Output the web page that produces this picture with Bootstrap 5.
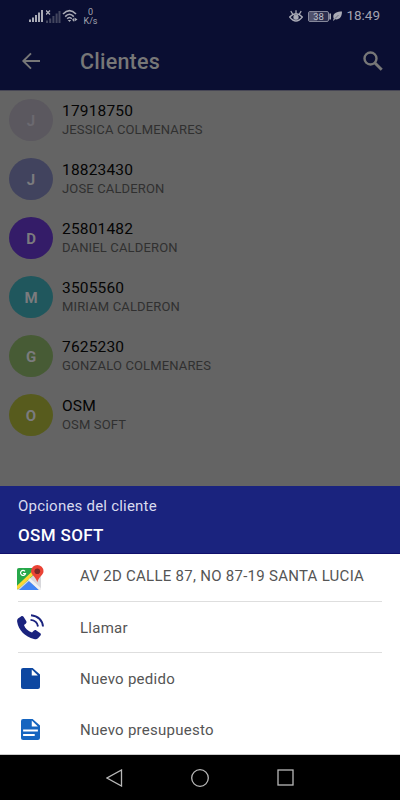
<!DOCTYPE html>
<html lang="es">
<head>
<meta charset="utf-8">
<meta name="viewport" content="width=device-width, initial-scale=1">
<title>Clientes</title>
<link href="https://cdn.jsdelivr.net/npm/bootstrap@5.3.0/dist/css/bootstrap.min.css" rel="stylesheet">
<style>
body{font-family:Roboto,"Liberation Sans",sans-serif;width:400px;height:800px;background:#646464;line-height:1}
svg{display:block;flex:none}
.topbar{height:90px;background:#0a0e32;color:#777}
.status{height:32px;padding:0 20px 0 29px;color:#a3a4b0}
.rate{font-size:9px;line-height:9.5px;margin:2px 0 0 5px;width:15px}
.clock{font-size:13.5px;margin-left:4px}
.appbar{height:58px;padding:0 17px 0 21px}
.app-title{font-size:21.5px;font-weight:500;letter-spacing:.22px;margin:1px 0 0 39px}
.clients{height:396px;border-top:1px solid #474755}
.client{height:59px;padding:0 9px}
.avatar{width:44px;height:42px;margin-top:-1px;padding-top:2px;font-size:15px;font-weight:700;color:#7b7b7e}
.avatar-pale{color:#6b6970}
.client-text{margin:-2px 0 0 9px}
.client-code{font-size:15.5px;line-height:18px;color:#050505;letter-spacing:.17px}
.client-name{font-size:13px;line-height:17px;color:#303030;margin-top:1px;letter-spacing:.15px}
.sheet-head{height:68px;background:#1a237e;padding:11px 18px 0;border-bottom:1px solid #10106b}
.sheet-sub{font-size:15px;line-height:18px;color:#d9dbef;letter-spacing:.22px}
.sheet-name{font-size:17px;line-height:20px;font-weight:500;margin-top:10px;letter-spacing:.35px}
.sheet{height:201px;padding:0 18px;border-bottom:1px solid #ccc}
.option{font-size:15px;color:#555;letter-spacing:.27px}
.option svg{margin-right:36px}
.addr{margin-top:-3px}
.low{margin-top:2px}
.ruled{border-bottom:1px solid #dedede}
.sysnav{height:45px;padding:0 106px}
</style>
</head>
<body class="overflow-hidden">
<header class="topbar">
  <div class="status d-flex align-items-center">
    <svg width="14" height="12" viewBox="0 1 14 12" fill="#aaabb6"><path d="M0 10.500h2V13H0zM3 8.500h2V13H3zM6 6h2v7H6zM9 3.500h2V13H9zM12 1h2v12h-2z"/></svg>
    <svg width="15" height="13" viewBox="0 0 15 13" style="margin-left:3px" fill="#43465f"><path d="M0 10.500h2V13H0zM3.200 8.500h2V13h-2zM6.400 6h2v7h-2zM9.600 3.500h2V13h-2zM12.500 1h2v12h-2z"/><path d="M0 .5l4 4M4 .5l-4 4" stroke="#b0b1bc" stroke-width="1.3"/></svg>
    <svg width="16" height="14" viewBox="0 0 16 14" style="margin-left:1px" fill="none" stroke="#aaabb6" stroke-width="1.6"><path d="M1 5Q7.5-1.7 14 5M3.2 7.6Q7.5 3 11.8 7.6M5.2 9.8Q7.5 7.2 9.8 9.8"/><path d="M5.8 11L7.5 13 9.2 11zM12.5 8.500v4l3-2zM12 9l-2 1.800 2 2z" fill="#aaabb6" stroke="none"/></svg>
    <div class="rate text-center">0<br>K/s</div>
    <svg width="14" height="12" viewBox="0 0 14 12" class="ms-auto" fill="none" stroke="#aaabb6" stroke-width="1.3"><path d="M.7 7Q7 .5 13.3 7 7 15 .7 7zM7 3.500V.3M3.600 4L1.800 1.200M10.400 4l1.800-2.800"/><circle cx="7" cy="7.200" r="2" fill="#aaabb6"/></svg>
    <svg width="23" height="11" viewBox="0 0 23 11" style="margin-left:5px"><rect x=".5" y=".5" width="20" height="10" rx="1.5" fill="#2b2e4e" stroke="#85879a"/><rect x="1" y="1" width="8" height="9" fill="#50526d"/><path d="M21.300 2.500h1.700v6h-1.700z" fill="#aaabb6"/><text x="10.5" y="8.800" text-anchor="middle" font-size="9.5" fill="#c0c1ca">38</text></svg>
    <svg width="9" height="10" viewBox="0 0 9 10" style="margin-left:2px" fill="#aaabb6"><path d="M9 .5C4 .5.3 2 .3 5.500c0 1 .2 1.600.5 2L0 9.300l.7.5L2 8.300C6.500 9 9 6 9 .5z"/><path d="M2 7.500L5.500 4" stroke="#0a0e32" stroke-width=".4"/></svg>
    <div class="clock">18:49</div>
  </div>
  <div class="appbar d-flex align-items-center">
    <svg width="20" height="18" fill="none" stroke="#777" stroke-width="1.9"><path d="M19 9H2.500M10 1.300L2.300 9 10 16.700"/></svg>
    <div class="app-title">Clientes</div>
    <svg width="20" height="20" viewBox="0 0 20 20" class="ms-auto" fill="none" stroke="#777"><circle cx="7.500" cy="7.500" r="6" stroke-width="2.400"/><path d="M11.700 11.700l7 7" stroke-width="2.900"/></svg>
  </div>
</header>
<main class="clients">
  <div class="client d-flex align-items-center"><div class="avatar avatar-pale rounded-circle d-flex align-items-center justify-content-center" style="background:#5b585f">J</div><div class="client-text"><div class="client-code">17918750</div><div class="client-name">JESSICA COLMENARES</div></div></div>
  <div class="client d-flex align-items-center"><div class="avatar rounded-circle d-flex align-items-center justify-content-center" style="background:#41435e">J</div><div class="client-text"><div class="client-code">18823430</div><div class="client-name">JOSE CALDERON</div></div></div>
  <div class="client d-flex align-items-center"><div class="avatar rounded-circle d-flex align-items-center justify-content-center" style="background:#341c68">D</div><div class="client-text"><div class="client-code">25801482</div><div class="client-name">DANIEL CALDERON</div></div></div>
  <div class="client d-flex align-items-center"><div class="avatar rounded-circle d-flex align-items-center justify-content-center" style="background:#20575d">M</div><div class="client-text"><div class="client-code">3505560</div><div class="client-name">MIRIAM CALDERON</div></div></div>
  <div class="client d-flex align-items-center"><div class="avatar rounded-circle d-flex align-items-center justify-content-center" style="background:#475b35">G</div><div class="client-text"><div class="client-code">7625230</div><div class="client-name">GONZALO COLMENARES</div></div></div>
  <div class="client d-flex align-items-center"><div class="avatar rounded-circle d-flex align-items-center justify-content-center" style="background:#575b1d">O</div><div class="client-text"><div class="client-code">OSM</div><div class="client-name">OSM SOFT</div></div></div>
</main>
<section>
  <div class="sheet-head text-white">
    <div class="sheet-sub">Opciones del cliente</div>
    <div class="sheet-name">OSM SOFT</div>
  </div>
  <div class="sheet bg-white">
    <div class="option ruled d-flex align-items-center" style="height:48px">
      <svg width="27" height="28" viewBox="0 0 27 28" style="margin-left:-1px"><defs><clipPath id="tile"><rect x="0" y="4" width="24" height="22" rx="2"/></clipPath></defs><g clip-path="url(#tile)"><path d="M0 4h24v22H0z" fill="#d8d8dc"/><path d="M0 4h20v4L0 26z" fill="#27a84a"/><path d="M2 26l10-9 10 9z" fill="#4285f4"/><path d="M-1 25L18 7" stroke="#fdd835" stroke-width="3.200"/><path d="M12 15l12 11" stroke="#f1f1f1" stroke-width="2.500"/></g><path d="M8 7.300A2.500 2.500 0 1 0 8.500 9.500H6" fill="none" stroke="#fff" stroke-width="1.200"/><path d="M20.300 1a6.200 6.200 0 0 0-6.200 6.200c0 4 4.700 5.300 6.200 11 1.500-5.700 6.200-7 6.200-11A6.200 6.200 0 0 0 20.300 1z" fill="#ea4335"/><circle cx="20.300" cy="7.200" r="2.800" fill="#7b2824"/></svg>
      <div class="addr">AV 2D CALLE 87, NO 87-19 SANTA LUCIA</div>
    </div>
    <div class="option ruled d-flex align-items-center" style="height:51px">
      <svg width="27" height="26" viewBox="0 0 27 26" style="margin-left:-1px"><path d="M1 4.500L4 2.500c1-.7 2-.5 2.700.5l2.500 4c.6 1 .4 2-.5 2.700L7 11c1 3.500 4 6 8 7.500l1.700-1.700c.8-.8 1.800-.9 2.700-.3l3.600 2.500c1 .7 1.200 1.600.5 2.600L21 24.300c-1 1-2.500 1-4 .6C8 23 1.500 16 .2 8 0 6.500.2 5.300 1 4.500z" fill="#1a237e"/><path d="M14 1.200c7 .5 11.500 5.300 12 11.300M13.500 5.900c4 .4 7 3 7.500 6.600" fill="none" stroke="#1a237e" stroke-width="1.900"/></svg>
      <div class="low">Llamar</div>
    </div>
    <div class="option d-flex align-items-center" style="height:51px">
      <svg width="19" height="21" viewBox="0 0 18 21" preserveAspectRatio="none" style="margin-left:3px;margin-right:40px"><path d="M2 0h9l7 6.500V19a2 2 0 0 1-2 2H2a2 2 0 0 1-2-2V2a2 2 0 0 1 2-2z" fill="#0d47a1"/><path d="M10.200 1.500v6H16z" fill="#fff"/></svg>
      <div class="low">Nuevo pedido</div>
    </div>
    <div class="option d-flex align-items-center" style="height:50px">
      <svg width="19" height="21" viewBox="0 0 18 21" preserveAspectRatio="none" style="margin-left:3px;margin-right:40px"><path d="M2 0h9l7 6.500V19a2 2 0 0 1-2 2H2a2 2 0 0 1-2-2V2a2 2 0 0 1 2-2z" fill="#1565c0"/><path d="M10.200 1.500v6H16zM2 10.500h14v2H2zM2 15h11v2H2z" fill="#fff"/></svg>
      <div class="low">Nuevo presupuesto</div>
    </div>
  </div>
  <nav class="sysnav bg-black d-flex align-items-center justify-content-between">
    <svg width="17" height="18" fill="none" stroke="#b8b8b8" stroke-width="1.300"><path d="M15.500 1v16L1 9z"/></svg>
    <svg width="18" height="18" fill="none" stroke="#b8b8b8" stroke-width="1.300"><circle cx="9" cy="9" r="8.300"/></svg>
    <svg width="17" height="17" fill="none" stroke="#b8b8b8" stroke-width="1.300"><rect x="1" y="1" width="15" height="15"/></svg>
  </nav>
</section>
<script src="https://cdn.jsdelivr.net/npm/bootstrap@5.3.0/dist/js/bootstrap.bundle.min.js"></script>
</body>
</html>
